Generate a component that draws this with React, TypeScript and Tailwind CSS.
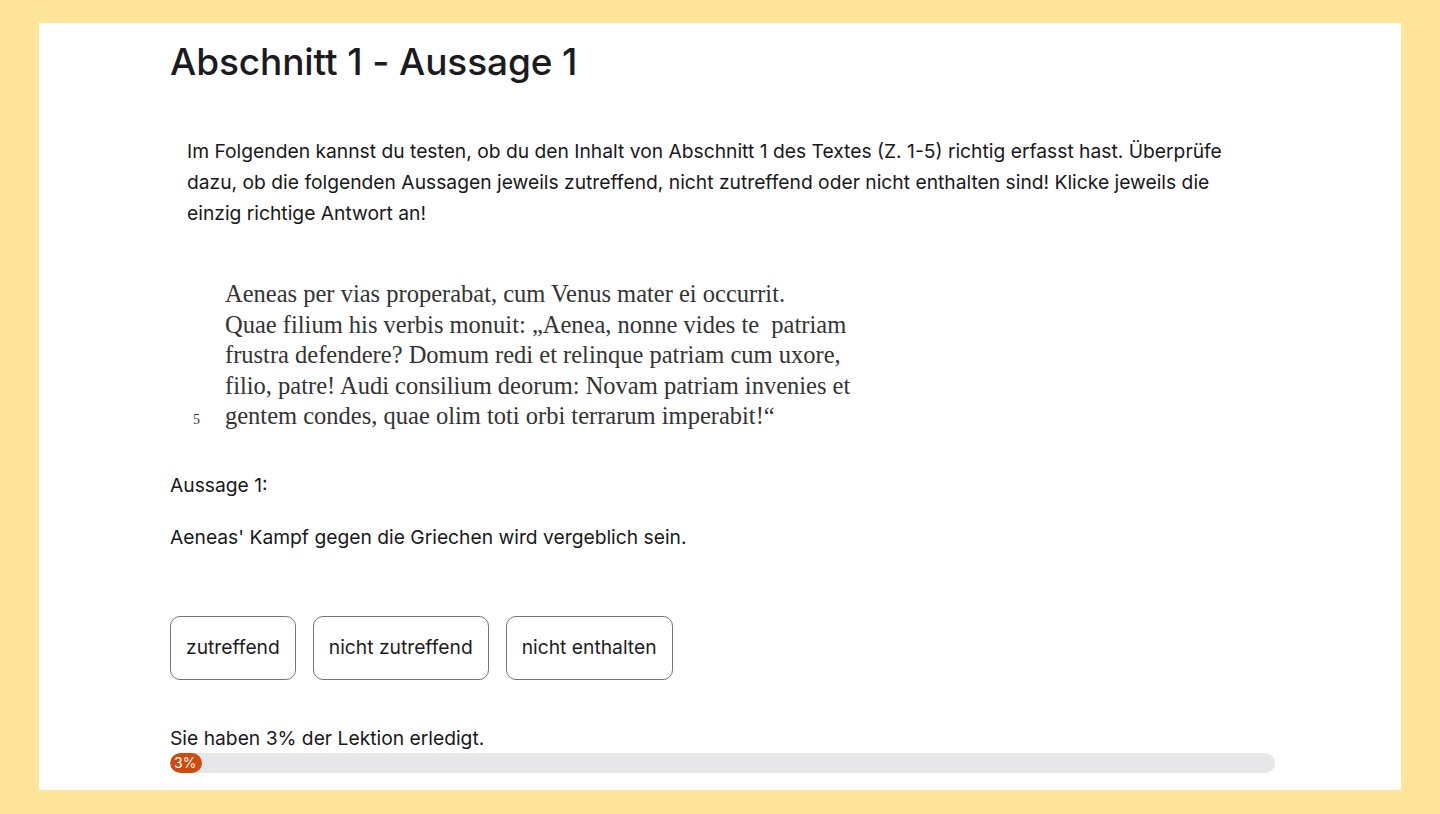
const LATIN = [
  'Aeneas per vias properabat, cum Venus mater ei occurrit.',
  'Quae filium his verbis monuit: „Aenea, nonne vides te  patriam',
  'frustra defendere? Domum redi et relinque patriam cum uxore,',
  'filio, patre! Audi consilium deorum: Novam patriam invenies et',
  'gentem condes, quae olim toti orbi terrarum imperabit!“',
];

const OPTIONS = ['zutreffend', 'nicht zutreffend', 'nicht enthalten'];

export default function App() {
  const progress = 3;

  return (
    <div className="min-h-screen bg-[#fee59a] px-[39px] pt-[23px] pb-[24px] font-['Inter',sans-serif] text-[#18181b]">
      <div className="bg-white h-[767px] px-[131px] pt-[14px]">
        {/* Header */}
        <h1 className="text-[37px] font-medium tracking-[-0.1px] leading-[50px] text-[#1b1b1f]">
          Abschnitt 1 - Aussage 1
        </h1>

        {/* Instructions */}
        <p className="mt-[49px] px-[17px] text-[19.25px] leading-[31px]">
          Im Folgenden kannst du testen, ob du den Inhalt von Abschnitt 1 des Textes (Z. 1-5) richtig
          erfasst hast. Überprüfe
          <br />
          dazu, ob die folgenden Aussagen jeweils zutreffend, nicht zutreffend oder nicht enthalten
          sind! Klicke jeweils die
          <br />
          einzig richtige Antwort an!
        </p>

        {/* Latin source text */}
        <div className="mt-[50px] font-['Liberation_Serif',serif] text-[24.5px] leading-[30.5px] text-[#333333]">
          {LATIN.map((line, i) => (
            <div key={i} className="flex items-baseline">
              <span className="w-[55px] shrink-0 pl-[23px] text-[14px]">{i === 4 ? '5' : ''}</span>
              <span className="whitespace-pre">{line}</span>
            </div>
          ))}
        </div>

        {/* Statement */}
        <p className="mt-[35px] text-[19.25px] leading-[28px]">Aussage 1:</p>
        <p className="mt-[24px] text-[19.25px] leading-[28px]">
          Aeneas' Kampf gegen die Griechen wird vergeblich sein.
        </p>

        {/* Answer buttons */}
        <div className="mt-[65px] flex gap-[17px]">
          {OPTIONS.map((opt) => (
            <button
              key={opt}
              className="h-[64px] px-[15px] rounded-[10px] border border-[#737378] bg-white text-[19.25px] text-[#1c1c22]"
            >
              {opt}
            </button>
          ))}
        </div>

        {/* Progress */}
        <p className="mt-[46px] text-[19.25px] leading-[24px]">Sie haben {progress}% der Lektion erledigt.</p>
        <div className="mt-[3px] h-[20px] w-[1105px] rounded-full bg-[#e7e7e9] overflow-hidden">
          <div
            className="h-full rounded-full bg-[#cf4a0c] text-white text-[14px] leading-[20px] pl-[4px]"
            style={{ width: 32 }}
          >
            {progress}%
          </div>
        </div>
      </div>
    </div>
  );
}
